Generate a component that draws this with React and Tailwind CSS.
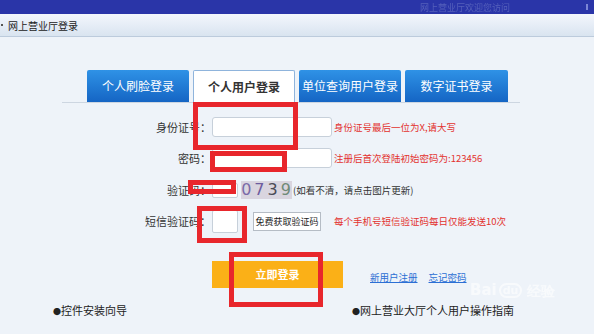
const TABS = [
  { label: '个人刷脸登录', active: false, w: 'w-[102px]' },
  { label: '个人用户登录', active: true, w: 'w-[102px]' },
  { label: '单位查询用户登录', active: false, w: 'w-[102px]' },
  { label: '数字证书登录', active: false, w: 'w-[103px]' },
];

const Label = ({ children }) => (
  <div className="w-[212px] shrink-0 pr-[1px] text-right text-[11px] text-[#333]">{children}</div>
);

const Mark = ({ className }) => (
  <div className={`pointer-events-none absolute border-[5px] border-[#e8262c] ${className}`} />
);

const App = () => {
  return (
    <div
      className="relative h-[334px] w-[594px] overflow-hidden bg-[#eef3f9]"
      style={{ fontFamily: '"Noto Sans CJK SC", "Noto Sans", sans-serif' }}
    >
      {/* top bar */}
      <div className="flex h-[14px] items-center justify-end bg-[#2a35a8] pr-[6px]">
        <span className="mr-[76px] text-[9px] leading-none text-[#5560bb] blur-[0.6px]">网上营业厅欢迎您访问</span>
        <span className="h-[6px] w-[2px] bg-[#7c86d6]" />
      </div>

      {/* header strip */}
      <div className="flex h-[23px] items-center border-b border-[#bccbdc] bg-gradient-to-b from-[#f3f6fc] to-[#d9e4f0] pl-[1px]">
        <span className="mr-[5px] h-[2px] w-[2px] bg-[#555]" />
        <span className="text-[10px] text-[#222]">网上营业厅登录</span>
      </div>

      {/* tabs */}
      <div className="pt-[33px]">
        <div className="ml-[62px] flex w-[458px] gap-[4px] border-b border-[#cdd6e1] pl-[25px]">
          {TABS.map((t) => (
            <div
              key={t.label}
              className={
                t.active
                  ? `${t.w} flex h-[32px] items-center justify-center rounded-t-[2px] border border-b-0 border-[#8fb4dc] bg-white text-[12px] font-bold text-[#333]`
                  : `${t.w} flex h-[32px] items-center justify-center rounded-t-[2px] bg-gradient-to-b from-[#2f92e6] to-[#1565c4] text-[12px] text-white`
              }
            >
              {t.label}
            </div>
          ))}
        </div>

        {/* form */}
        <div className="mt-[14px]">
          <div className="flex h-[20px] items-center">
            <Label>身份证号：</Label>
            <div className="h-[20px] w-[120px] rounded-[3px] border border-[#c7d0da] bg-white" />
            <span className="ml-[2px] text-[9.5px] text-[#e3322f]">身份证号最后一位为X,请大写</span>
          </div>

          <div className="mt-[11px] flex h-[20px] items-center">
            <Label>密码：</Label>
            <div className="h-[20px] w-[120px] rounded-[3px] border border-[#c7d0da] bg-white" />
            <span className="ml-[2px] text-[9.5px] text-[#e3322f]">注册后首次登陆初始密码为:123456</span>
          </div>

          <div className="mt-[12px] flex h-[20px] items-center">
            <Label>验证码：</Label>
            <div className="h-[15px] w-[26px] rounded-[2px] border border-[#c7d0da] bg-white" />
            <div
              className="ml-[3px] flex h-[18px] w-[51px] items-center justify-center gap-[2px] bg-[#d9d5df] text-[16px] leading-none tracking-[1px]"
              style={{ fontFamily: '"DejaVu Sans", sans-serif' }}
            >
              <span className="text-[#7a6aa8]">0</span>
              <span className="text-[#6d5c9e]">7</span>
              <span className="text-[#4a4a55]">3</span>
              <span className="text-[#6f8a78]">9</span>
            </div>
            <span className="ml-[1px] text-[9.5px] text-[#333]">(如看不清，请点击图片更新)</span>
          </div>

          <div className="mt-[10px] flex h-[23px] items-center">
            <Label>短信验证码：</Label>
            <div className="h-[23px] w-[26px] rounded-[2px] border border-[#c7d0da] bg-white" />
            <div className="ml-[15px] flex h-[19px] w-[68px] items-center justify-center whitespace-nowrap border border-[#b5bcc5] bg-white text-[9px] text-[#222]">
              免费获取验证码
            </div>
            <span className="ml-[13px] text-[9.5px] text-[#e3322f]">每个手机号短信验证码每日仅能发送10次</span>
          </div>

          <div className="mt-[28px] flex items-center">
            <div className="ml-[212px] flex h-[27px] w-[131px] items-center justify-center bg-[#fbb017] text-[11px] font-bold text-white">
              立即登录
            </div>
            <a className="ml-[27px] mt-[6px] text-[9.5px] text-[#2b6fd4] underline">新用户注册</a>
            <a className="ml-[11px] mt-[6px] text-[9.5px] text-[#2b6fd4] underline">忘记密码</a>
          </div>

          <div className="mt-[14px] flex h-[16px] items-center text-[11px] text-[#222]">
            <span className="ml-[53px]"><span className="text-[8px]">●</span>控件安装向导</span>
            <span className="ml-[225px]"><span className="text-[8px]">●</span>网上营业大厅个人用户操作指南</span>
          </div>
        </div>
      </div>

      {/* watermark */}
      <div className="pointer-events-none absolute left-[470px] top-[283px] flex flex-col items-center text-white opacity-60">
        <div
          className="flex items-end gap-[2px] text-[15px] font-bold leading-none"
          style={{ fontFamily: '"DejaVu Sans", sans-serif' }}
        >
          <span>Bai</span>
          <span className="rounded-full border-2 border-white px-[2px] text-[11px]">du</span>
          <span className="ml-[3px] text-[14px]">经验</span>
        </div>
      </div>

      {/* red annotation boxes */}
      <Mark className="left-[193px] top-[102px] h-[48px] w-[105px]" />
      <Mark className="left-[210px] top-[151px] h-[21px] w-[77px]" />
      <Mark className="left-[188px] top-[180px] h-[14px] w-[48px] border-[4px]" />
      <Mark className="left-[197px] top-[206px] h-[37px] w-[50px]" />
      <Mark className="left-[229px] top-[252px] h-[55px] w-[94px]" />
    </div>
  );
};

export default App;
